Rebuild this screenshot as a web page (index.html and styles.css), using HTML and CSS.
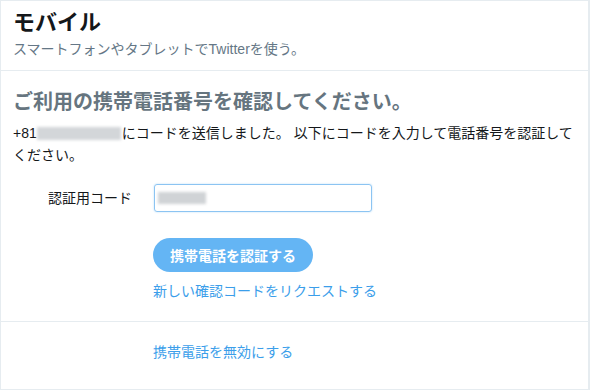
FILE: index.html
```html
<!DOCTYPE html>
<html lang="ja">
<head>
<meta charset="utf-8">
<link rel="stylesheet" href="styles.css">
</head>
<body>
<div class="card">
  <header class="head">
    <h1 class="title">モバイル</h1>
    <p class="sub">スマートフォンやタブレットでTwitterを使う。</p>
  </header>
  <section class="verify">
    <h2 class="heading">ご利用の携帯電話番号を確認してください。</h2>
    <p class="body">+81<span class="blur-num"></span>にコードを送信しました。 以下にコードを入力して電話番号を認証してください。</p>
    <div class="form-row">
      <label class="label">認証用コード</label>
      <div class="input"><span class="blur-code"></span></div>
    </div>
    <div class="actions">
      <button class="btn">携帯電話を認証する</button>
      <a class="link">新しい確認コードをリクエストする</a>
    </div>
  </section>
  <section class="disable">
    <a class="link">携帯電話を無効にする</a>
  </section>
</div>
</body>
</html>
```
FILE: styles.css
```css
* { box-sizing: border-box; }
html, body { margin: 0; padding: 0; background: #fff; }
body {
  font-family: "Liberation Sans", "Noto Sans CJK JP", sans-serif;
  color: #14171a;
}
.card {
  width: 590px;
  height: 390px;
  border: 1px solid #e6ecf0;
  border-right-width: 2px;
  display: flex;
  flex-direction: column;
}
.head {
  padding: 8px 12px 12px;
  border-bottom: 1px solid #e6ecf0;
}
.title {
  margin: 0;
  font-size: 22px;
  line-height: 27px;
  font-weight: bold;
  color: #14171a;
}
.sub {
  margin: 4px 0 0;
  font-size: 14px;
  line-height: 18px;
  color: #657786;
}
.verify {
  padding: 18px 12px 20px;
  border-bottom: 1px solid #e6ecf0;
}
.heading {
  margin: 0;
  font-size: 20px;
  line-height: 26px;
  font-weight: bold;
  color: #66757f;
}
.body {
  margin: 7px 0 0;
  font-size: 14px;
  line-height: 22px;
  color: #14171a;
}
.blur-num {
  display: inline-block;
  width: 84px;
  height: 13px;
  margin: 0 1px 0 0;
  vertical-align: -2px;
  background: #d3d6d9;
  filter: blur(1.5px);
}
.form-row {
  margin-top: 18px;
  display: flex;
  align-items: center;
}
.label {
  width: 119px;
  margin-right: 22px;
  text-align: right;
  font-size: 14px;
  line-height: 20px;
  color: #14171a;
}
.input {
  width: 218px;
  height: 28px;
  border: 1px solid #8cc4f2;
  border-radius: 3px;
  box-shadow: 0 0 2px #b5dbf7;
  padding: 6px 3px;
  display: flex;
  align-items: center;
}
.blur-code {
  display: block;
  width: 48px;
  height: 12px;
  background: #d0d3d6;
  filter: blur(1.5px);
}
.actions {
  margin-top: 26px;
  padding-left: 140px;
  display: flex;
  flex-direction: column;
  align-items: flex-start;
}
.btn {
  height: 34px;
  width: 160px;
  border: none;
  border-radius: 17px;
  background: #64b5f4;
  color: #fff;
  font-family: inherit;
  font-size: 14px;
  font-weight: bold;
  padding: 0;
}
.link {
  display: block;
  color: #3b9eea;
  font-size: 14px;
  line-height: 20px;
  text-decoration: none;
}
.actions .link { margin-top: 9px; }
.disable {
  padding: 20px 12px 0 152px;
}
```
